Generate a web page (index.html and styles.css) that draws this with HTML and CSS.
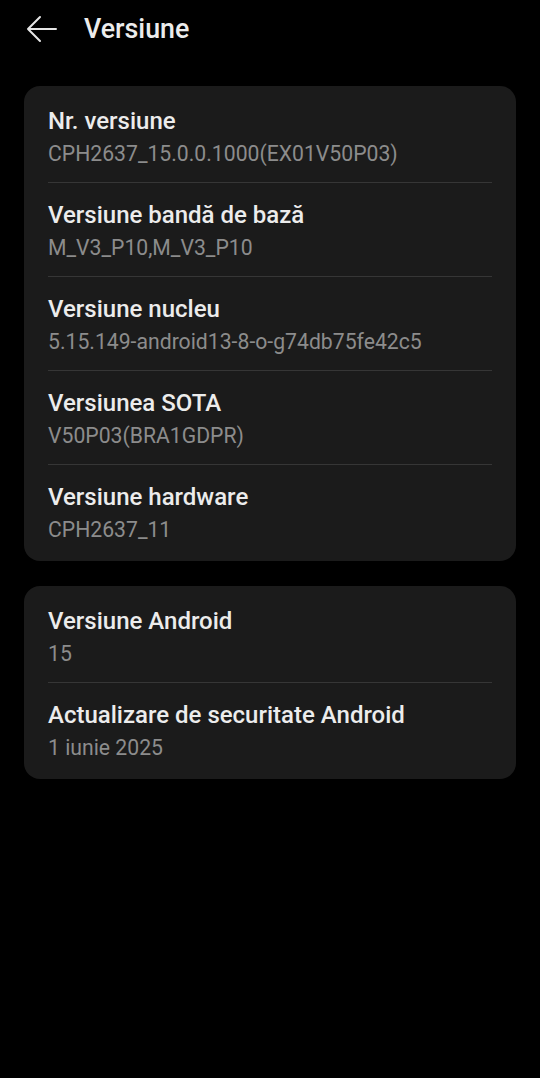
FILE: index.html
```html
<!DOCTYPE html>
<html>
<head>
  <title>Versiune</title>
  <link rel="stylesheet" href="styles.css">
</head>
<body>
  <div class="header">
    <svg class="back" width="34" height="30" viewBox="0 0 34 30">
      <path d="M31 15H3M15 3L3 15L15 27" fill="none" stroke="#e6e6e6" stroke-width="2" stroke-linecap="round" stroke-linejoin="round"/>
    </svg>
    <h1>Versiune</h1>
  </div>

  <div class="card">
    <div class="row">
      <div class="title">Nr. versiune</div>
      <div class="value">CPH2637_15.0.0.1000(EX01V50P03)</div>
    </div>
    <div class="row">
      <div class="title">Versiune bandă de bază</div>
      <div class="value">M_V3_P10,M_V3_P10</div>
    </div>
    <div class="row">
      <div class="title">Versiune nucleu</div>
      <div class="value">5.15.149-android13-8-o-g74db75fe42c5</div>
    </div>
    <div class="row">
      <div class="title">Versiunea SOTA</div>
      <div class="value">V50P03(BRA1GDPR)</div>
    </div>
    <div class="row">
      <div class="title">Versiune hardware</div>
      <div class="value">CPH2637_11</div>
    </div>
  </div>

  <div class="card">
    <div class="row">
      <div class="title">Versiune Android</div>
      <div class="value">15</div>
    </div>
    <div class="row">
      <div class="title">Actualizare de securitate Android</div>
      <div class="value">1 iunie 2025</div>
    </div>
  </div>
</body>
</html>
```

FILE: styles.css
```css
body {
  margin: 0;
  background-color: #000;
  font-family: Roboto, "Noto Sans", sans-serif;
  color: #ececec;
  height: 1078px;
}

.header {
  display: flex;
  align-items: center;
  height: 58px;
  padding-left: 25px;
}

.header .back {
  margin-right: 25px;
}

.header h1 {
  margin: 0;
  font-size: 26.8px;
  font-weight: 500;
  color: #ececec;
}

.card {
  margin: 28px 24px 0 24px;
  background-color: #1b1b1b;
  border-radius: 16px;
  padding: 3px 24px;
}

.card + .card {
  margin-top: 25px;
}

.row {
  padding: 16px 0 11px 0;
  border-top: 1px solid #363636;
}

.row:first-child {
  border-top: 0;
}

.title {
  font-size: 24px;
  font-weight: 500;
  line-height: 32px;
  color: #ececec;
}

.value {
  font-size: 21.2px;
  line-height: 34px;
  color: #8c8c8c;
}
```
